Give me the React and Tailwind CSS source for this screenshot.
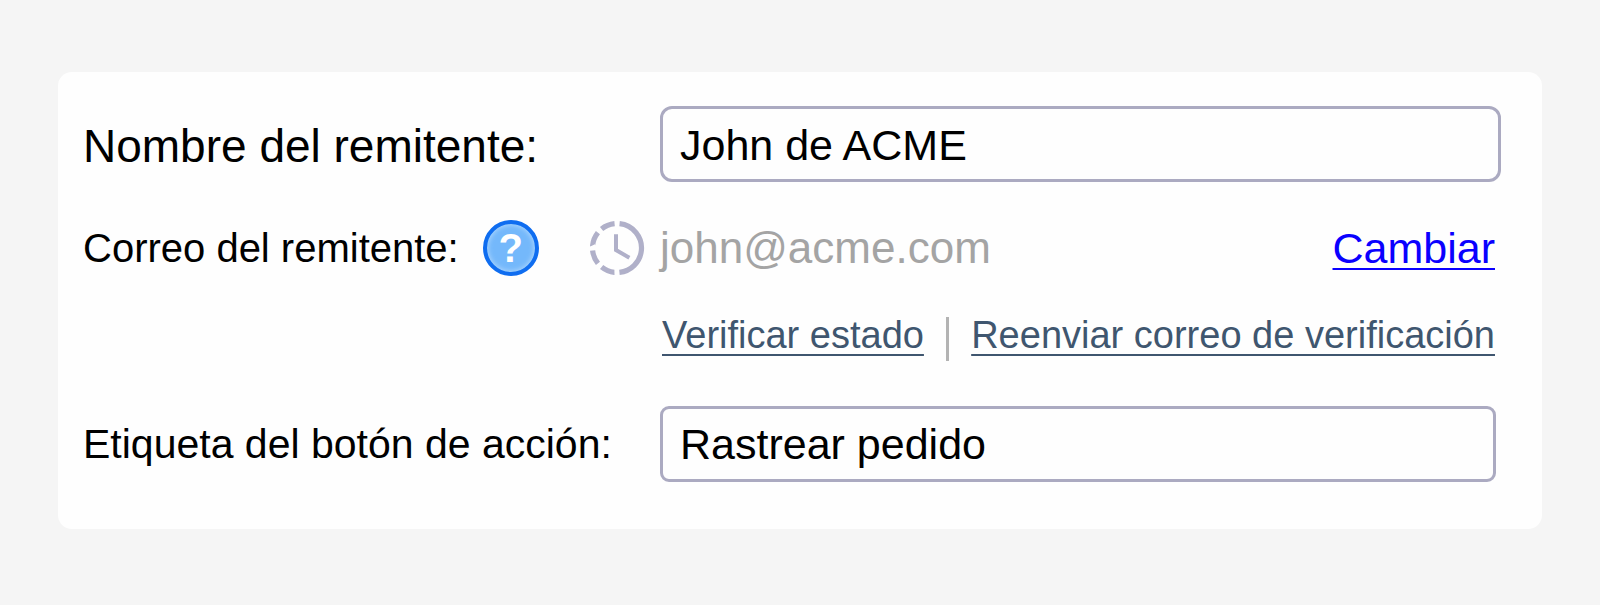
import { useState } from 'react';

function HelpButton() {
  return (
    <button
      type="button"
      aria-label="Ayuda"
      className="size-14 shrink-0 cursor-pointer rounded-full border-4 border-[#0f6df0] bg-[#74b8fb] text-center text-[40px] leading-[48px] font-bold text-white shadow-[inset_0_0_5px_1px_#add6fd]"
    >
      ?
    </button>
  );
}

function PendingIcon() {
  return (
    <svg viewBox="0 0 56 56" className="ml-auto size-14 shrink-0" fill="none" stroke="#b0b0c9" aria-hidden="true">
      <circle
        cx="28"
        cy="28"
        r="24.5"
        strokeWidth="5.2"
        pathLength="360"
        strokeDasharray="168 12 33 12 33 12 33 12 33 12"
        transform="rotate(-84 28 28)"
      />
      <path d="M27 14.3V30l13.4 7.8" strokeWidth="4" />
    </svg>
  );
}

export default function App() {
  const [name, setName] = useState('John de ACME');
  const [action, setAction] = useState('Rastrear pedido');

  return (
    <div className="min-h-screen bg-[#f5f5f5] px-[58px] py-[72px] font-['Liberation_Sans',Arial,sans-serif] text-black">
      <form className="rounded-[14px] bg-[#fefefe] pt-[34px] pb-[47px] pl-[25px]">
        <div className="grid grid-cols-[577px_1fr] items-center pr-[41px]">
          <label htmlFor="sender-name" className="pt-1 text-[46px] leading-[72px]">
            Nombre del remitente:
          </label>
          <input
            id="sender-name"
            type="text"
            value={name}
            onChange={(e) => setName(e.target.value)}
            className="h-[76px] w-full rounded-xl border-3 border-[#abaac1] bg-transparent px-[17px] pt-0.5 text-[43px] outline-none"
          />
        </div>

        <div className="mt-[38px] grid grid-cols-[577px_1fr] items-center pr-[47px]">
          <div className="flex items-center pr-[15px]">
            <span className="mr-6 text-[40px] leading-[56px]">Correo del remitente:</span>
            <HelpButton />
            <PendingIcon />
          </div>
          <div className="flex items-center justify-between leading-[54px]">
            <span className="text-[44px] text-[#a4a4a4]">john@acme.com</span>
            <a href="#cambiar" className="text-[43px] text-[#0a00ff] underline decoration-2 underline-offset-[5px]">
              Cambiar
            </a>
          </div>
        </div>

        <div className="mt-[41px] ml-[579px] flex items-start justify-between pr-[47px] text-[38px] leading-[36px] text-[#3f566f]">
          <a href="#estado" className="underline decoration-2 underline-offset-[6px]">
            Verificar estado
          </a>
          <span className="h-11 w-[3px] bg-[#b3b3b3]" />
          <a href="#reenviar" className="underline decoration-2 underline-offset-[6px]">
            Reenviar correo de verificación
          </a>
        </div>

        <div className="mt-[45px] grid grid-cols-[577px_1fr] items-center pr-[46px]">
          <label htmlFor="action-label" className="text-[41px] leading-[76px]">
            Etiqueta del botón de acción:
          </label>
          <input
            id="action-label"
            type="text"
            value={action}
            onChange={(e) => setAction(e.target.value)}
            className="h-[76px] w-full rounded-[9px] border-3 border-[#abaac1] bg-transparent px-[17px] text-[43px] outline-none"
          />
        </div>
      </form>
    </div>
  );
}
